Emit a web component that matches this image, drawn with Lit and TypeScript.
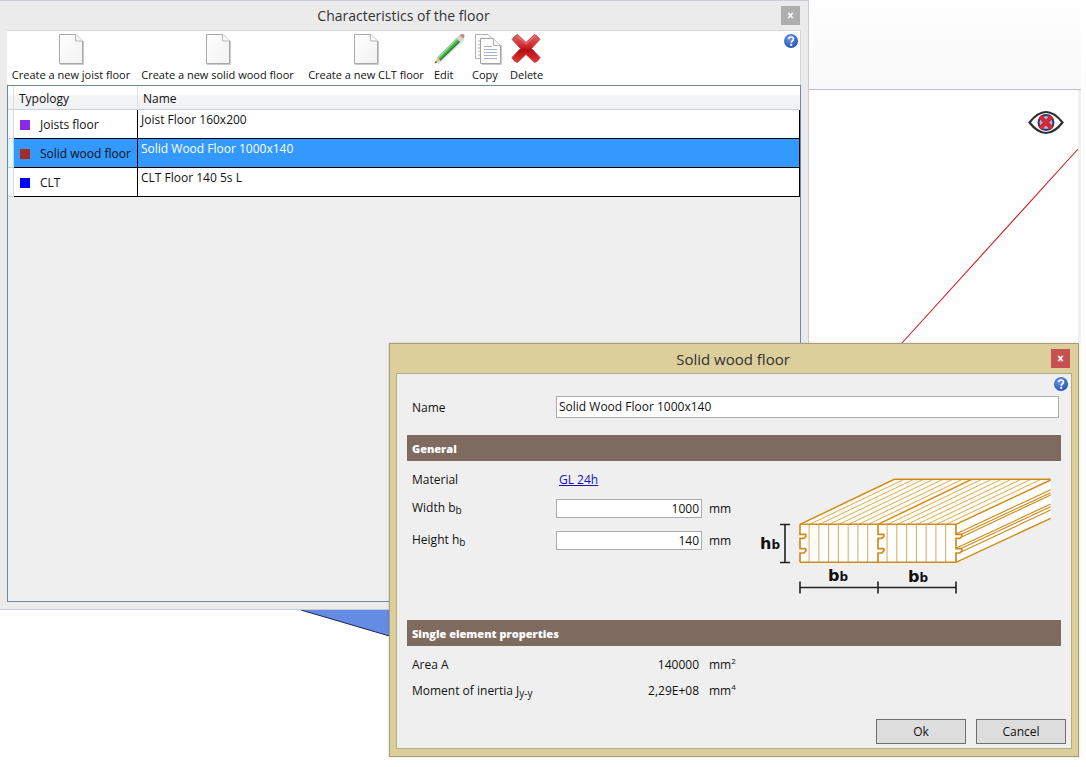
import { LitElement, html, svg, css } from "lit";
import { customElement, state } from "lit/decorators.js";

interface Floor {
  kind: string;
  name: string;
  color: string;
}

const pageIcon = html`<svg class="icon" viewBox="0 0 32 32" aria-hidden="true">
  <defs>
    <linearGradient id="pg" x1="0" y1="0" x2="1" y2="1">
      <stop offset="0" stop-color="#ffffff" />
      <stop offset="1" stop-color="#f1f1f1" />
    </linearGradient>
  </defs>
  <path d="M5 31.500H28.500V8" fill="none" stroke="#c9c9c9" stroke-width="1" />
  <path d="M4.500 1.500H21L27.500 8V30.500H4.500Z" fill="url(#pg)" stroke="#a9a9a9" />
  <path d="M20.500 1.500V8H27.500" fill="#fafafa" stroke="#b4b4b4" />
</svg>`;

const pencilIcon = html`<svg class="icon" viewBox="0 0 32 32" aria-hidden="true">
  <path d="M4 30.500L30 6" stroke="#dedede" stroke-width="2" />
  <path d="M.5 30.500L3.500 24.500L6.500 27.700Z" fill="#e6c48c" />
  <path d="M.5 30.500L1.800 28L3.200 29.300Z" fill="#5a3a1c" />
  <path d="M3.500 24.500L22.500 5L26.200 8.700L6.500 27.700Z" fill="#4db050" />
  <path d="M3.500 24.500L22.500 5L23.700 6.200L4.600 25.600Z" fill="#93dc95" />
  <path d="M5.600 26.700L25.200 7.700L26.200 8.700L6.500 27.700Z" fill="#2f8436" />
  <path d="M22.500 5L25.500 2L29.200 5.700L26.200 8.700Z" fill="#d5d5d8" />
  <path d="M25.500 2Q27.800 .3 30 1.300Q31.500 3.200 29.200 5.700Z" fill="#c58b94" />
</svg>`;

const copyIcon = html`<svg class="icon" viewBox="0 0 32 32" aria-hidden="true">
  <path d="M3.500 1.500H16L20.500 6V25.500H3.500Z" fill="#fcfcfc" stroke="#b0b0b0" />
  <path d="M6 8H8M6 11.500H8M6 15H8M6 18.500H8M6 22H8" stroke="#b5bac6" />
  <path d="M10 31.500H29.500V12" fill="none" stroke="#c9c9c9" />
  <path d="M8.500 5.500H21.500L28.500 12.500V30.500H8.500Z" fill="#fdfdfd" stroke="#a3a3a3" />
  <path d="M21.500 5.500V12.500H28.500" fill="#f4f4f4" stroke="#b4b4b4" />
  <path d="M12 13.500H20M12 16.500H25M12 19.500H25M12 22.500H25M12 25.500H25" stroke="#a9b3c6" />
</svg>`;

const deleteIcon = html`<svg class="icon" viewBox="0 0 32 32" aria-hidden="true">
  <defs>
    <linearGradient id="rd" x1="0" y1="0" x2="0" y2="1">
      <stop offset="0" stop-color="#e0686a" />
      <stop offset=".45" stop-color="#cf2226" />
      <stop offset=".55" stop-color="#b50d12" />
      <stop offset="1" stop-color="#e03a3c" />
    </linearGradient>
  </defs>
  <path
    d="M7.500 1.500L16 9.500L24.500 1.500Q28 3 29.800 6.500L21.500 15.500L30 24.500Q28.500 28.500 24.500 29.500L16 21.500L7.500 29.500Q3.500 28.500 2 24.500L10.500 15.500L2.200 6.500Q4 3 7.500 1.500Z"
    fill="url(#rd)" stroke="#c0474a" stroke-linejoin="round" />
  <path d="M7.500 3.200L16 11.200L24.500 3.200" fill="none" stroke="#f0a0a0" stroke-width="1" opacity=".7" />
</svg>`;

const helpIcon = html`<svg class="help-icon" viewBox="0 0 14 14" aria-hidden="true">
  <defs>
    <radialGradient id="hb" cx=".4" cy=".3" r=".8">
      <stop offset="0" stop-color="#6f9ae6" />
      <stop offset="1" stop-color="#1c49b4" />
    </radialGradient>
  </defs>
  <circle cx="7" cy="7" r="7" fill="url(#hb)" />
  <path d="M4.600 5.200Q4.800 3 7.100 3Q9.400 3.100 9.400 5Q9.400 6.200 8.200 6.900Q7.200 7.500 7.200 8.800"
    fill="none" stroke="#fff" stroke-width="1.700" />
  <circle cx="7.200" cy="10.900" r="1.100" fill="#fff" />
</svg>`;

const closeIcon = html`<svg class="close-icon" viewBox="0 0 7 7" aria-hidden="true">
  <path d="M1.500 1.200L5.500 5.800M5.500 1.200L1.500 5.800" stroke="#fff" stroke-width="1.600" />
  <path d="M.7 1.200H2.500M4.500 1.200H6.300M.7 5.800H2.500M4.500 5.800H6.300" stroke="#fff" stroke-width=".8" />
</svg>`;

const boards = [1, 2, 3, 4, 5, 6, 7];

@customElement("floor-section-figure")
export class FloorSectionFigure extends LitElement {
  static styles = css`
    :host { display: block; }
    .figure { display: block; width: 300px; height: 130px; }
    .dim { font: 700 16px "DejaVu Sans", sans-serif; fill: #111; }
    .sub { font-size: 12px; }
  `;

  private groove(x: number) {
    return svg`<path d="M${x} 178V208H${x + 17}L${x + 18} 214L${x + 12} 220H${x}V251H${x + 17}L${x + 18} 257L${x + 12} 264H${x}V292"
      fill="none" stroke="#cf8a1c" stroke-width="5" />`;
  }

  render() {
    return html`<svg class="figure" viewBox="5 5 300 130" role="img" aria-label="Solid wood floor cross section">
      <g transform="scale(.3333)" stroke="#cf8a1c" fill="none">
        <path d="M150 178L433 43H902V160L618 292H150Z" fill="#fffbef" stroke="none" />
        <path d="M150 178H618V292H150Z" fill="#fff" stroke="none" />
        <path d="M618 178L902 45V160L618 292Z" fill="#fff" stroke="none" />
        ${boards.map((i) => svg`
          <path d="M${150 + i * 29.300} 178L${433 + i * 29.200} 43" stroke="#cf9c4c" stroke-width="2.500" />
          <path d="M${384 + i * 29.300} 178L${666 + i * 29.500} 43" stroke="#cf9c4c" stroke-width="2.500" />
          <path d="M${150 + i * 29.300 - 2} 178V292" stroke="#dba75c" stroke-width="3" />
          <path d="M${384 + i * 29.300 - 2} 178V292" stroke="#dba75c" stroke-width="3" />`)}
        <path d="M150 178L433 43H902" stroke-width="4.500" />
        <path d="M384 178L665 43M618 178L902 45" stroke-width="4.500" />
        <path d="M150 178H618M150 292H618L902 160" stroke-width="4.500" />
        <path d="M618 207L902 74M635 208L902 83M635 216L902 90M618 250L902 117M635 250L902 125M635 260L902 135"
          stroke-width="3.500" />
        ${[150, 384, 618].map((x) => this.groove(x))}
      </g>
      <path d="M35 59.500V97.500M30 59.500H40M30 97.500H40M50 122.500H206M50 116.500V128.500M128 116.500V128.500M206 116.500V128.500"
        fill="none" stroke="#222" stroke-width="1.600" />
      <text class="dim" x="10" y="84">h<tspan class="sub">b</tspan></text>
      <text class="dim" x="78" y="116">b<tspan class="sub">b</tspan></text>
      <text class="dim" x="158" y="117">b<tspan class="sub">b</tspan></text>
    </svg>`;
  }
}

@customElement("app-root")
export class AppRoot extends LitElement {
  @state() private selected = 1;

  private floors: Floor[] = [
    { kind: "Joists floor", name: "Joist Floor 160x200", color: "#8a2be2" },
    { kind: "Solid wood floor", name: "Solid Wood Floor 1000x140", color: "#a52a2a" },
    { kind: "CLT", name: "CLT Floor 140 5s L", color: "#0000ff" },
  ];

  static styles = css`
    :host {
      display: block;
      position: relative;
      min-height: 100vh;
      overflow: hidden;
      background: #fefefe;
      color: #111;
      font: 12px/16px "Open Sans", "Noto Sans", sans-serif;
    }
    * { box-sizing: border-box; }
    button, input { font: inherit; color: inherit; margin: 0; }
    .ribbon {
      height: 90px;
      margin-right: 5px;
      border-bottom: 1px solid #b9bdc8;
      background: linear-gradient(#fefefe, #f9f9fa);
    }
    .scene { position: absolute; top: 0; right: 0; width: 1086px; height: 767px; }

    .window { position: absolute; display: flex; flex-direction: column; }
    .titlebar {
      display: grid;
      grid-template-columns: 19px 1fr 19px;
      align-items: center;
      height: 29px;
      margin-right: 1px;
      color: #333;
    }
    .title { grid-column: 2; margin: 0; text-align: center; font-size: 14px; font-weight: 400; line-height: 20px; }
    .dialog .title { font-size: 15px; }
    .close {
      display: grid;
      place-items: center;
      width: 19px;
      height: 19px;
      padding: 0;
      border: 0;
      background: #aeaeae;
    }
    .close-icon { width: 7px; height: 7px; }
    .help { display: block; padding: 0; border: 0; background: none; height: 14px; }
    .help-icon { display: block; width: 14px; height: 14px; }

    .list-window {
      left: 0;
      top: 0;
      right: 277px;
      padding: 0 7px 7px;
      border: solid #c8ccd3;
      border-width: 1px 1px 1px 0;
      background: #ebebeb;
    }
    .toolbar {
      display: flex;
      padding: 2px 2px 2px 0;
      border: solid #d8d8d8;
      border-width: 1px 1px 0 0;
      background: #fff;
    }
    .toolbar .help { margin-top: 1px; }
    .tools { display: grid; grid-template-columns: 128px 165px 132px 38px 38px 38px; flex: 1; }
    .tool {
      display: flex;
      flex-direction: column;
      align-items: center;
      gap: 2px;
      padding: 0;
      border: 0;
      background: none;
      white-space: nowrap;
      font-size: 11px;
    }
    .tool.small { align-items: flex-start; padding-left: 2px; }
    .icon { display: block; width: 32px; height: 32px; overflow: visible; }
    .list { min-height: 517px; border: 1px solid #7189a0; background: #efefef; }
    .grid { width: 100%; border-collapse: separate; border-spacing: 0; table-layout: fixed; background: #fff; }
    .grid th {
      height: 24px;
      padding: 2px 5px 0;
      border-right: 1px solid #dcdfe3;
      border-bottom: 1px solid #cfd3d6;
      background: linear-gradient(#fff 40%, #f3f4f6 42%, #f1f2f4);
      font-weight: 400;
      text-align: left;
    }
    .grid th.last { border-right-color: transparent; }
    .grid td { height: 29px; padding: 0; border: solid #000; border-width: 0 1px 1px 0; vertical-align: top; }
    .grid td.handle { border-color: #d5dade; background: #f7f8f9; }
    .col-handle { width: 6px; }
    .col-type { width: 124px; }
    .kind { display: flex; align-items: center; gap: 10px; padding: 7px 0 5px 6px; white-space: nowrap; }
    .swatch { width: 10px; height: 10px; }
    .grid td.name { padding: 2px 3px; }
    .selected td { background: #3399ff; }
    .selected td.handle { background: #e3f5fc; border-color: #a8dcee; }
    .selected .name { color: #fff; }

    .dialog {
      top: 343px;
      right: 7px;
      width: 690px;
      padding: 0 7px 7px 6px;
      border: 1px solid #a49d78;
      background: #dccf9b;
      box-shadow: 0 0 3px #00000022;
    }
    .dialog .close { background: #c75050; }
    .client {
      display: flex;
      flex-direction: column;
      padding: 3px 4px 4px 10px;
      margin-right: -1px;
      border: 1px solid #b4ad85;
      background: #efefef;
    }
    .dialog .help { align-self: flex-end; margin-right: -1px; }
    .form-row { display: grid; grid-template-columns: 144px 146px 1fr; align-items: center; padding-left: 5px; }
    .name-row { grid-template-columns: 144px 1fr; height: 44px; margin-right: 8px; padding-bottom: 12px; }
    .name-row label { padding-top: 2px; }
    .field { width: 100%; height: 19px; padding: 0 2px; border: 1px solid #ababab; background: #fff; }
    .field.number { text-align: right; }
    .field.tall { height: 22px; padding-bottom: 2px; }
    .section {
      height: 26px;
      margin: 0 6px 0 0;
      padding: 1px 5px 0;
      background: #7f6a60;
      color: #fff;
      font-size: 11px;
      font-weight: 800;
      line-height: 25px;
    }
    .general { display: flex; justify-content: space-between; min-height: 159px; padding-top: 5px; }
    .fields { display: grid; grid-template-rows: 28px 28px 36px; align-content: start; }
    .fields .unit { padding-top: 2px; }
    .drawing { margin: 4px 12px 0 0; }
    .unit { padding-left: 7px; }
    .link { padding-left: 3px; color: #1414b8; }
    .value { padding-right: 3px; text-align: right; }
    .low, .high { font-size: 10px; line-height: 0; }
    .low { vertical-align: -2px; }
    .high { font-size: 8px; vertical-align: 5px; }
    .results { display: grid; grid-auto-rows: 26px; padding-top: 6px; min-height: 73px; }
    .actions { display: flex; justify-content: flex-end; gap: 10px; padding-right: 1px; }
    .action { width: 90px; height: 25px; padding: 0; border: 1px solid #707070; background: #dddddd; font-size: 12px; }
  `;

  private renderScene() {
    return html`<svg class="scene" viewBox="0 0 1086 767" aria-hidden="true">
      <path d="M1079.500 90V343" stroke="#f1f1f3" stroke-width="3" />
      <path d="M1078 149L902 343L860 389" fill="none" stroke="#cc2226" stroke-width="1.100" />
      <path d="M301 610H420V645Z" fill="#648ce4" />
      <path d="M301 610L420 645" stroke="#1b2350" />
      <circle cx="1046" cy="122.500" r="7.500" fill="#a9b0dc" stroke="#343a66" stroke-width="2" />
      <path d="M1029.500 122.500Q1046 101.500 1062.500 122.500Q1046 143.500 1029.500 122.500Z" fill="none" stroke="#2e2e30" stroke-width="2.200" />
      <path d="M1040 116.500L1052 128.500M1052 116.500L1040 128.500" stroke="#c9232e" stroke-width="4" />
      <path d="M1040 116.500L1052 128.500M1052 116.500L1040 128.500" stroke="#dc2a2e" stroke-width="2" />
    </svg>`;
  }

  private renderList() {
    return html`<section class="window list-window" aria-labelledby="list-title">
      <header class="titlebar">
        <h1 class="title" id="list-title">Characteristics of the floor</h1>
        <button class="close" aria-label="Close">${closeIcon}</button>
      </header>
      <div class="toolbar">
        <div class="tools">
          <button class="tool">${pageIcon}<span>Create a new joist floor</span></button>
          <button class="tool">${pageIcon}<span>Create a new solid wood floor</span></button>
          <button class="tool">${pageIcon}<span>Create a new CLT floor</span></button>
          <button class="tool small">${pencilIcon}<span>Edit</span></button>
          <button class="tool small">${copyIcon}<span>Copy</span></button>
          <button class="tool small">${deleteIcon}<span>Delete</span></button>
        </div>
        <button class="help" aria-label="Help">${helpIcon}</button>
      </div>
      <div class="list">
        <table class="grid">
          <colgroup><col class="col-handle" /><col class="col-type" /><col /></colgroup>
          <thead>
            <tr><th></th><th>Typology</th><th class="last">Name</th></tr>
          </thead>
          <tbody>
            ${this.floors.map((f, i) => html`
              <tr class=${i === this.selected ? "selected" : ""} @click=${() => (this.selected = i)}>
                <td class="handle"></td>
                <td><div class="kind"><span class="swatch" style="background:${f.color}"></span>${f.kind}</div></td>
                <td class="name">${f.name}</td>
              </tr>`)}
          </tbody>
        </table>
      </div>
    </section>`;
  }

  private renderDialog() {
    return html`<form class="window dialog" aria-labelledby="dialog-title" @submit=${(e: Event) => e.preventDefault()}>
      <header class="titlebar">
        <h2 class="title" id="dialog-title">Solid wood floor</h2>
        <button type="button" class="close" aria-label="Close">${closeIcon}</button>
      </header>
      <div class="client">
        <button type="button" class="help" aria-label="Help">${helpIcon}</button>
        <div class="form-row name-row">
          <label for="name">Name</label>
          <input class="field tall" id="name" value="Solid Wood Floor 1000x140" />
        </div>
        <h3 class="section">General</h3>
        <div class="general">
          <div class="fields">
            <div class="form-row"><span>Material</span><a class="link" href="#material">GL 24h</a></div>
            <div class="form-row">
              <label for="width">Width b<span class="low">b</span></label>
              <input class="field number" id="width" value="1000" /><span class="unit">mm</span>
            </div>
            <div class="form-row">
              <label for="height">Height h<span class="low">b</span></label>
              <input class="field number" id="height" value="140" /><span class="unit">mm</span>
            </div>
          </div>
          <floor-section-figure class="drawing"></floor-section-figure>
        </div>
        <h3 class="section">Single element properties</h3>
        <div class="results">
          <div class="form-row">
            <span>Area A</span><output class="value">140000</output><span class="unit">mm<span class="high">2</span></span>
          </div>
          <div class="form-row">
            <span>Moment of inertia J<span class="low">y-y</span></span><output class="value">2,29E+08</output><span class="unit">mm<span class="high">4</span></span>
          </div>
        </div>
        <div class="actions">
          <button class="action">Ok</button>
          <button type="button" class="action">Cancel</button>
        </div>
      </div>
    </form>`;
  }

  render() {
    return html`<div class="ribbon"></div>
      ${this.renderScene()} ${this.renderList()} ${this.renderDialog()}`;
  }
}
